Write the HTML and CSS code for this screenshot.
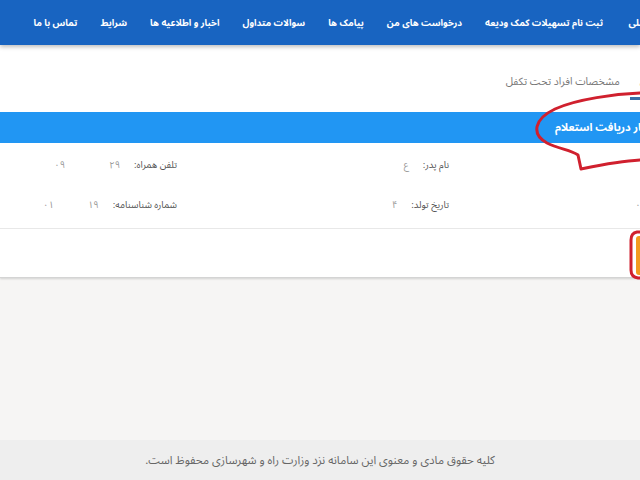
FILE: index.html
```html
<!DOCTYPE html>
<html lang="fa">
<head>
  <meta charset="UTF-8" />
  <meta name="viewport" content="width=device-width, initial-scale=1.0"/>
  <title>سامانه کمک ودیعه</title>
  <link rel="stylesheet" href="styles.css">
</head>
<body>
  <header class="header">
    <nav class="menu wide">
      <a href="#" class="menu-item">صفحه اصلی</a>
      <a href="#" class="menu-item">ثبت نام تسهیلات کمک ودیعه</a>
      <a href="#" class="menu-item">درخواست های من</a>
      <a href="#" class="menu-item">پیامک ها</a>
      <a href="#" class="menu-item">سوالات متداول</a>
      <a href="#" class="menu-item">اخبار و اطلاعیه ها</a>
      <a href="#" class="menu-item">شرایط</a>
      <a href="#" class="menu-item">تماس با ما</a>
    </nav>
  </header>

  <main class="page">
    <section class="card wide">
      <div class="tabs">
        <a href="#" class="tab active">اطلاعات متقاضی</a>
        <a href="#" class="tab">مشخصات افراد تحت تکفل</a>
      </div>

      <div class="status">در انتظار دریافت استعلام</div>

      <div class="fields">
        <div class="field">
          <span class="label">نام:</span>
          <span class="value">ح</span>
        </div>
        <div class="field">
          <span class="label">نام پدر:</span>
          <span class="value">ع</span>
        </div>
        <div class="field">
          <span class="label">تلفن همراه:</span>
          <bdi class="value num" dir="ltr"><span>۰۹</span><span class="masked m-phone"></span><span>۲۹</span></bdi>
        </div>

        <div class="field">
          <span class="label">کد ملی:</span>
          <bdi class="value num" dir="ltr"><span>۰</span><span class="masked m-code"></span><span>۳</span></bdi>
        </div>
        <div class="field">
          <span class="label">تاریخ تولد:</span>
          <span class="value">۴</span>
        </div>
        <div class="field">
          <span class="label">شماره شناسنامه:</span>
          <bdi class="value num" dir="ltr"><span>۰۱</span><span class="masked m-id"></span><span>۱۹</span></bdi>
        </div>
      </div>

      <div class="actions">
        <button class="btn">ویرایش</button>
      </div>
    </section>
  </main>

  <footer class="footer">
    کلیه حقوق مادی و معنوی این سامانه نزد وزارت راه و شهرسازی محفوظ است.
  </footer>

  <!-- red marks drawn over the screenshot -->
  <svg class="marks" width="640" height="480" viewBox="0 0 640 480">
    <path d="M642,93 C615,94 577,99 555,109 C534,119 531,134 547,143 C559,149 571,150 578,155 L581,169 C596,166 620,161 642,160"
          fill="none" stroke="#d0202e" stroke-width="3" stroke-linejoin="round"/>
    <path d="M645,232 L637,232 Q631,233 631,240 L631,270 Q631,277 638,278 L645,278"
          fill="none" stroke="#d0202e" stroke-width="3"/>
  </svg>
</body>
</html>
```

FILE: styles.css
```css
* {
  margin: 0;
  padding: 0;
  box-sizing: border-box;
  font-family: 'Noto Sans Arabic', 'DejaVu Sans', sans-serif;
}

html, body {
  height: 100%;
}

body {
  position: relative;
  display: flex;
  flex-direction: column;
  overflow: hidden;
  background: #f6f5f4;
}

a {
  text-decoration: none;
  color: inherit;
}

/* page is wider than the window, the right part is cut */
.wide {
  width: 760px;
  direction: rtl;
}

.header {
  height: 45px;
  background-color: #1864c1;
  box-shadow: 0 2px 4px rgba(0, 0, 0, 0.25);
  overflow: hidden;
  position: relative;
  z-index: 1;
}

.menu {
  display: flex;
  justify-content: flex-end;
  align-items: center;
  padding-left: 22px;
  height: 100%;
}

.menu-item {
  padding: 0 11.5px;
  font-size: 9.3px;
  font-weight: bold;
  color: #fff;
  white-space: nowrap;
}

.menu-item:first-child {
  padding-left: 14px;
}

.page {
  flex: 1;
  overflow: hidden;
}

.card {
  background: #fff;
  border-bottom: 1px solid #d4d4d4;
  box-shadow: 0 1px 2px rgba(0, 0, 0, 0.15);
}

.tabs {
  display: flex;
  padding-top: 21px;
  padding-right: 38px;
  margin-bottom: 12px;
}

.tab {
  height: 34px;
  padding: 0 10px;
  display: flex;
  align-items: center;
  font-size: 10.5px;
  color: #777;
  border-bottom: 3px solid transparent;
  white-space: nowrap;
}

.tab.active {
  color: #444;
  border-bottom-color: #3a6fa8;
}

.status {
  height: 31px;
  display: flex;
  align-items: center;
  padding-right: 86px;
  background-color: #2196f3;
  color: #fff;
  font-size: 11px;
  font-weight: bold;
}

.fields {
  display: grid;
  grid-template-columns: 276px 272px 1fr;
  grid-auto-rows: 40px;
  padding: 2px 35px 3px 30px;
  border-bottom: 1px solid #e8e8e8;
}

.field {
  display: flex;
  align-items: center;
  gap: 14px;
  white-space: nowrap;
}

.label {
  font-size: 9.5px;
  color: #555;
}

.value {
  font-size: 9.5px;
  color: #999;
}

.num {
  display: inline-flex;
  direction: ltr;
}

.masked {
  display: inline-block;
}

.m-phone {
  width: 44px;
}

.m-code {
  width: 36px;
}

.m-id {
  width: 34px;
}

.actions {
  display: flex;
  padding: 7px 35px 2px 0;
}

.btn {
  width: 89px;
  height: 39px;
  border: none;
  border-radius: 3px;
  background-color: #f39a1e;
  color: #fff;
  font-size: 10px;
}

.footer {
  height: 40px;
  display: flex;
  align-items: center;
  justify-content: center;
  background: #eeeeee;
  direction: rtl;
  font-size: 11.5px;
  color: #666;
}

.marks {
  position: absolute;
  top: 0;
  left: 0;
  pointer-events: none;
}
```
